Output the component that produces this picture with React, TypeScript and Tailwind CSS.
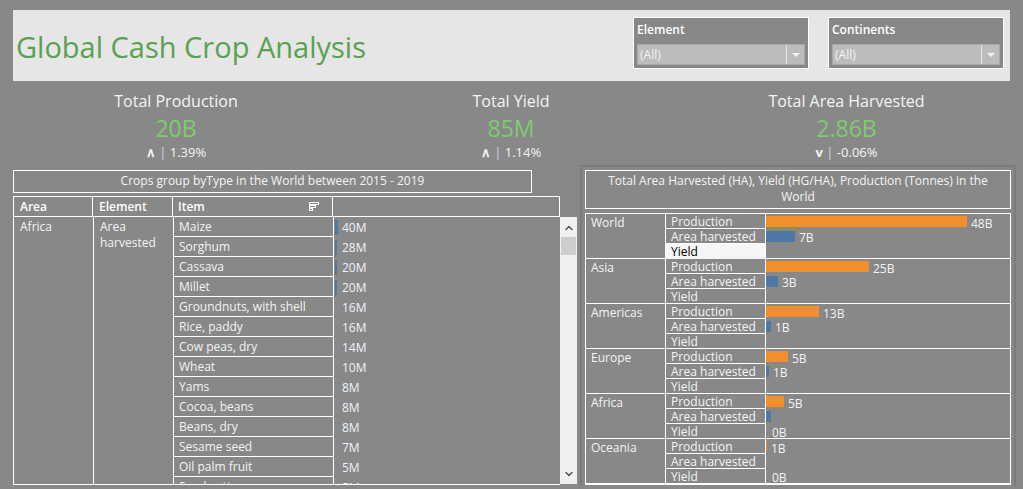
import { ChevronDown, ChevronUp } from 'lucide-react';

const items: [string, string, number][] = [
  ['Maize', '40M', 3],
  ['Sorghum', '28M', 2],
  ['Cassava', '20M', 2],
  ['Millet', '20M', 2],
  ['Groundnuts, with shell', '16M', 0],
  ['Rice, paddy', '16M', 0],
  ['Cow peas, dry', '14M', 0],
  ['Wheat', '10M', 0],
  ['Yams', '8M', 0],
  ['Cocoa, beans', '8M', 0],
  ['Beans, dry', '8M', 0],
  ['Sesame seed', '7M', 0],
  ['Oil palm fruit', '5M', 0],
  ['Seed cotton', '5M', 0],
];

interface Measure {
  name: string;
  bar: number;
  label?: string;
  color: string;
}

interface Region {
  region: string;
  rows: Measure[];
}

const ORANGE = 'bg-[#f28e2b]';
const BLUE = 'bg-[#4e79a7]';

const regions: Region[] = [
  { region: 'World', rows: [
    { name: 'Production', bar: 201, label: '48B', color: ORANGE },
    { name: 'Area harvested', bar: 29, label: '7B', color: BLUE },
    { name: 'Yield', bar: 0, color: BLUE },
  ] },
  { region: 'Asia', rows: [
    { name: 'Production', bar: 103, label: '25B', color: ORANGE },
    { name: 'Area harvested', bar: 12, label: '3B', color: BLUE },
    { name: 'Yield', bar: 0, color: BLUE },
  ] },
  { region: 'Americas', rows: [
    { name: 'Production', bar: 53, label: '13B', color: ORANGE },
    { name: 'Area harvested', bar: 5, label: '1B', color: BLUE },
    { name: 'Yield', bar: 0, color: BLUE },
  ] },
  { region: 'Europe', rows: [
    { name: 'Production', bar: 22, label: '5B', color: ORANGE },
    { name: 'Area harvested', bar: 3, label: '1B', color: BLUE },
    { name: 'Yield', bar: 0, color: BLUE },
  ] },
  { region: 'Africa', rows: [
    { name: 'Production', bar: 18, label: '5B', color: ORANGE },
    { name: 'Area harvested', bar: 5, color: BLUE },
    { name: 'Yield', bar: 0, label: '0B', color: BLUE },
  ] },
  { region: 'Oceania', rows: [
    { name: 'Production', bar: 1, label: '1B', color: ORANGE },
    { name: 'Area harvested', bar: 0, color: BLUE },
    { name: 'Yield', bar: 0, label: '0B', color: BLUE },
  ] },
];

function Filter({ title }: { title: string }) {
  return (
    <div className="w-[176px] h-[52px] bg-[#888888] border border-white px-[3px] pt-[4px]">
      <div className="text-[12px] font-semibold text-white leading-[16px]">{title}</div>
      <div className="mt-[6px] h-[21px] flex bg-[#bcbcbc] border border-[#a8a8a8]">
        <div className="flex-1 text-[12px] text-[#f4f4f4] leading-[19px] pl-[2px]">(All)</div>
        <div className="w-[18px] border-l border-[#e6e6e6] flex items-center justify-center">
          <div className="w-0 h-0 border-l-[4px] border-r-[4px] border-t-[4px] border-l-transparent border-r-transparent border-t-[#f4f4f4]" />
        </div>
      </div>
    </div>
  );
}

function Kpi({ title, value, arrow, pct, width }: { title: string; value: string; arrow: string; pct: string; width: string }) {
  return (
    <div className={`${width} flex flex-col items-center`}>
      <div className="text-[16px] text-[#f4f4f4] leading-[20px] mt-[10px]">{title}</div>
      <div className="text-[23px] text-[#7fcb6f] leading-[28px] mt-[3px]">{value}</div>
      <div className="text-[13px] text-[#f4f4f4] leading-[16px] mt-[2px]">
        <span className="font-bold">{arrow}</span> <span className="text-[#c8d8f0]">|</span> {pct}
      </div>
    </div>
  );
}

export default function App() {
  return (
    <div className="w-[1023px] h-[489px] bg-[#888888] overflow-hidden font-['Open_Sans',sans-serif] flex flex-col">
      {/* Header */}
      <div className="mx-[13px] mt-[10px] h-[71px] bg-[#e6e6e6] flex items-start">
        <div className="text-[29px] text-[#59a14f] mt-[19px] ml-[3px] leading-[36px] flex-1">
          Global Cash Crop Analysis
        </div>
        <div className="mt-[7px] mr-[6px] flex gap-[19px]">
          <Filter title="Element" />
          <Filter title="Continents" />
        </div>
      </div>

      {/* KPIs */}
      <div className="flex h-[84px]">
        <Kpi width="w-[352px]" title="Total Production" value="20B" arrow="∧" pct="1.39%" />
        <Kpi width="w-[318px]" title="Total Yield" value="85M" arrow="∧" pct="1.14%" />
        <Kpi width="w-[353px]" title="Total Area Harvested" value="2.86B" arrow="v" pct="-0.06%" />
      </div>

      <div className="flex">
        {/* Left panel */}
        <div className="ml-[13px] w-[564px] mt-[5px] flex flex-col">
          <div className="w-[519px] h-[23px] border border-white text-[12px] text-[#f4f4f4] text-center leading-[20px]">
            Crops group byType in the World between 2015 - 2019
          </div>
          <div className="mt-[3px] flex h-[289px]">
            <div className="w-[547px] border-b border-white overflow-hidden">
              <div className="flex h-[21px] border border-white text-[12px] font-semibold text-white leading-[19px]">
                <div className="w-[79px] border-r border-white pl-[6px]">Area</div>
                <div className="w-[80px] border-r border-white pl-[6px]">Element</div>
                <div className="w-[160px] border-r border-white pl-[5px] flex items-center justify-between pr-[12px]">
                  <span>Item</span>
                  <svg width="12" height="12" viewBox="0 0 12 12" fill="none" stroke="white" strokeWidth="1">
                    <rect x="1.5" y="1.5" width="9" height="2" />
                    <rect x="1.5" y="4.5" width="6" height="2" />
                    <rect x="1.5" y="7.5" width="3" height="2" />
                  </svg>
                </div>
                <div className="flex-1" />
              </div>
              <div className="flex h-full border-l border-white text-[12px] text-[#f4f4f4]">
                <div className="w-[80px] border-r border-white pl-[6px] pt-[2px] leading-[16px]">Africa</div>
                <div className="w-[80px] border-r border-white pl-[6px] pt-[2px] leading-[16px]">
                  Area<br />harvested
                </div>
                <div className="flex-1 flex flex-col">
                  {items.map(([name, value, bar]) => (
                    <div key={name} className="flex h-[20px] shrink-0">
                      <div className="w-[160px] border-b border-r border-white pl-[5px] leading-[19px]">{name}</div>
                      <div className="flex-1 flex items-center">
                        <div className="ml-[1px] w-[3px] h-[16px] flex items-center">
                          {bar > 0 && <div className="bg-[#4e79a7] h-[15px]" style={{ width: bar }} />}
                        </div>
                        <span className="ml-[4px] text-[#eef2fb] leading-[19px]">{value}</span>
                      </div>
                    </div>
                  ))}
                </div>
              </div>
            </div>
            <div className="w-[17px] mt-[21px] mb-[1px] bg-[#f0f0f0] flex flex-col items-center">
              <ChevronUp size={12} strokeWidth={3} className="text-[#555] mt-[5px]" />
              <div className="w-[15px] h-[18px] bg-[#cdcdcd] mt-[3px]" />
              <div className="flex-1" />
              <ChevronDown size={12} strokeWidth={3} className="text-[#555] mb-[4px]" />
            </div>
          </div>
        </div>

        {/* Right panel */}
        <div className="ml-[3px] w-[436px] h-[321px] border-2 border-[#7b7b7b] border-b-0 px-[3px] pt-[3px]">
          <div className="h-[39px] border border-white text-[12px] text-[#f4f4f4] text-center leading-[16px] pt-[2px] px-[10px]">
            Total Area Harvested (HA), Yield (HG/HA), Production (Tonnes) in the World
          </div>
          <div className="mt-[4px] border border-white border-b-2">
            {regions.map((r, i) => (
              <div key={r.region} className={`flex text-[12px] text-[#f4f4f4] ${i > 0 ? 'border-t border-white h-[45px]' : 'h-[44px]'}`}>
                <div className="w-[80px] border-r border-white pl-[5px] leading-[16px] pt-[1px]">{r.region}</div>
                <div className="w-[100px] border-r border-white flex flex-col">
                  {r.rows.map((m, j) => {
                    const highlight = r.region === 'World' && m.name === 'Yield';
                    return (
                      <div
                        key={m.name}
                        className={`h-[15px] shrink-0 pl-[5px] leading-[15px] ${j < 2 ? 'border-b border-white' : ''} ${highlight ? 'bg-[#f5f5f5] text-black' : ''}`}
                      >
                        {m.name}
                      </div>
                    );
                  })}
                </div>
                <div className="flex-1 flex flex-col">
                  {r.rows.map((m) => (
                    <div key={m.name} className="h-[15px] shrink-0 flex items-center">
                      <div className={`${m.color} h-[11px]`} style={{ width: m.bar }} />
                      {m.label && (
                        <span className={`leading-[15px] ${m.bar > 0 ? 'ml-[4px]' : 'ml-[6px]'} ${m.color === ORANGE ? 'mt-[4px]' : 'mt-[2px]'}`}>
                          {m.label}
                        </span>
                      )}
                    </div>
                  ))}
                </div>
              </div>
            ))}
          </div>
        </div>
      </div>
    </div>
  );
}
